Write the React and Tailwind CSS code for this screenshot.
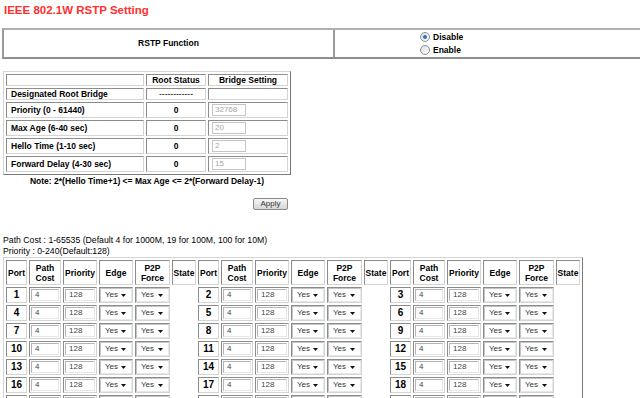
import React from "react"

const inset = "border border-t-[#8c8c8c] border-l-[#8c8c8c] border-b-[#d4d4d4] border-r-[#d4d4d4]"
const outset = "border border-t-[#d4d4d4] border-l-[#d4d4d4] border-b-[#7a7a7a] border-r-[#7a7a7a]"

function Radio({ checked, label }) {
  return (
    <label className="flex items-center gap-[3px] h-[14px]">
      <span className="w-[10px] h-[10px] rounded-full border border-[#8e8e8e] bg-linear-to-br from-[#dcdcdc] to-white flex items-center justify-center">
        {checked && <span className="w-[4px] h-[4px] rounded-full bg-[#2d6ec2]" />}
      </span>
      <span className="text-[8.5px] font-bold leading-none">{label}</span>
    </label>
  )
}

function Sel() {
  return (
    <div className="flex items-center justify-between h-[14px] border border-t-[#c4c4c4] border-l-[#c4c4c4] border-b-[#e8e8e8] border-r-[#e8e8e8] bg-white pl-[4px] pr-[5px]">
      <span className="text-[8px] leading-none text-[#333]">Yes</span>
      <svg width="5" height="3" viewBox="0 0 5 3">
        <path d="M0 0h5L2.5 3z" fill="#111" />
      </svg>
    </div>
  )
}

function Field({ value }) {
  return (
    <div className="h-[12px] border border-t-[#b4b4b4] border-l-[#b4b4b4] border-b-[#e6e6e6] border-r-[#e6e6e6] bg-white pl-[3px] text-[8px] leading-[10px] text-[#444]">
      {value}
    </div>
  )
}

const bridgeRows = [
  ["Priority (0 - 61440)", "32768"],
  ["Max Age (6-40 sec)", "20"],
  ["Hello Time (1-10 sec)", "2"],
  ["Forward Delay (4-30 sec)", "15"],
]

const widths = ["w-[21px]", "w-[32px]", "w-[34px]", "w-[34px]", "w-[35px]", "w-[24px]"]

export default function App() {
  const rows = []
  for (let r = 0; r < 9; r++) rows.push([r * 3 + 1, r * 3 + 2, r * 3 + 3])

  return (
    <div className="w-[640px] h-[398px] overflow-hidden bg-white text-black font-['Liberation_Sans',Arial,sans-serif]">
      <h1 className="pl-[4px] pt-[3px] text-[11.5px] leading-[14px] font-bold text-[#ff3030]">
        IEEE 802.1W RSTP Setting
      </h1>

      <div className="mt-[11px] ml-[2px] w-[660px] h-[31px] flex border-2 border-t-[#b0b0b0] border-l-[#9a9a9a] border-b-[#8e8e8e] border-r-[#8e8e8e]">
        <div className="w-[331px] border-r-2 border-r-[#9a9a9a] flex items-center justify-center text-[8.5px] font-bold">
          RSTP Function
        </div>
        <div className="pl-[85px] flex flex-col justify-center">
          <Radio checked label="Disable" />
          <Radio label="Enable" />
        </div>
      </div>

      <div className="ml-[3px] mt-[12px] w-[288px]">
        <table className={`${outset} border-separate border-spacing-[2px] table-fixed w-[288px] text-[8.5px] font-bold`}>
          <tbody>
            <tr className="h-[12px]">
              <td className={`${inset} w-[138px] p-0`}></td>
              <td className={`${inset} w-[60px] p-0 text-center leading-[10px]`}>Root Status</td>
              <td className={`${inset} p-0 text-center leading-[10px]`}>Bridge Setting</td>
            </tr>
            <tr className="h-[12px]">
              <td className={`${inset} p-0 pl-[4px] leading-[10px]`}>Designated Root Bridge</td>
              <td className={`${inset} p-0 text-center leading-[10px] font-normal`}>------------</td>
              <td className={`${inset} p-0`}></td>
            </tr>
            {bridgeRows.map(([label, val]) => (
              <tr key={label} className="h-[16px]">
                <td className={`${inset} p-0 pl-[4px] leading-[10px]`}>{label}</td>
                <td className={`${inset} p-0 text-center leading-[10px]`}>0</td>
                <td className={`${inset} p-0 pl-[3px]`}>
                  <div className="w-[34px] h-[12px] border border-[#c4c4c4] bg-white pl-[2px] text-[8px] leading-[10px] font-normal text-[#a6a6a6]">
                    {val}
                  </div>
                </td>
              </tr>
            ))}
          </tbody>
        </table>
        <p className="text-center text-[8.5px] font-bold leading-[11px] mt-[1px]">
          Note: 2*(Hello Time+1) &lt;= Max Age &lt;= 2*(Forward Delay-1)
        </p>
        <div className="flex justify-end pr-[3px] mt-[11px]">
          <button className="w-[35px] h-[12px] rounded-[2px] border border-[#8a8a8a] bg-linear-to-b from-[#f6f6f6] to-[#d6d6d6] text-[8px] leading-none text-[#333]">
            Apply
          </button>
        </div>
      </div>

      <div className="ml-[3px] mt-[25px] text-[8.7px] leading-[10.5px]">
        <p>Path Cost : 1-65535 (Default 4 for 1000M, 19 for 100M, 100 for 10M)</p>
        <p>Priority : 0-240(Default:128)</p>
      </div>

      <table className={`${outset} ml-[3px] mt-[1px] border-separate border-spacing-[2px] table-fixed w-[580px]`}>
        <thead>
          <tr className="h-[25px]">
            {[0, 1, 2].map((g) =>
              ["Port", "Path Cost", "Priority", "Edge", "P2P Force", "State"].map((h, i) => (
                <th
                  key={g + h}
                  className={`${inset} ${widths[i]} p-0 text-center text-[8.5px] leading-[10px] font-bold`}
                >
                  {h === "Path Cost" ? (
                    <>Path<br />Cost</>
                  ) : h === "P2P Force" ? (
                    <>P2P<br />Force</>
                  ) : (
                    h
                  )}
                </th>
              ))
            )}
          </tr>
        </thead>
        <tbody>
          {rows.map((r) => (
            <tr key={r[0]} className="h-[16px]">
              {r.map((p) => (
                <React.Fragment key={p}>
                  <td className={`${inset} p-0 text-center text-[10px] leading-[12px] font-bold`}>{p}</td>
                  <td className={`${inset} p-[1px]`}><Field value="4" /></td>
                  <td className={`${inset} p-[1px]`}><Field value="128" /></td>
                  <td className={`${inset} p-0`}><Sel /></td>
                  <td className={`${inset} p-0`}><Sel /></td>
                  <td className="p-0"></td>
                </React.Fragment>
              ))}
            </tr>
          ))}
        </tbody>
      </table>
    </div>
  )
}
